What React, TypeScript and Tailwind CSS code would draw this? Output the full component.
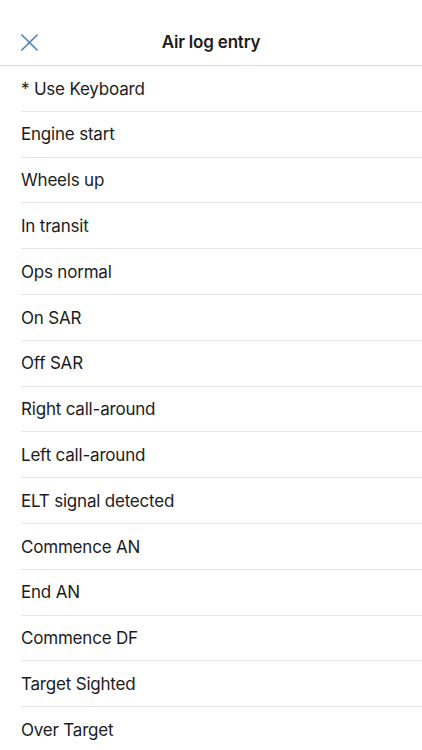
import React from "react";

const entries = [
  "* Use Keyboard",
  "Engine start",
  "Wheels up",
  "In transit",
  "Ops normal",
  "On SAR",
  "Off SAR",
  "Right call-around",
  "Left call-around",
  "ELT signal detected",
  "Commence AN",
  "End AN",
  "Commence DF",
  "Target Sighted",
  "Over Target",
];

const App: React.FC = () => {
  return (
    <div
      className="w-[422px] h-[750px] overflow-hidden bg-white text-[#1c1c1e]"
      style={{ fontFamily: "Inter, 'Noto Sans', sans-serif" }}
    >
      {/* Header */}
      <div className="relative flex h-[66px] items-end justify-center border-b border-[#dcdcdc] pb-[10px]">
        <button className="absolute left-[20px] top-[33px] text-[#4a7cc0]" aria-label="Close">
          <svg viewBox="0 0 20 20" className="h-[19px] w-[19px]" fill="none" stroke="currentColor" strokeWidth="1.6">
            <path d="M1.5 1.5 L18.5 18.5 M18.5 1.5 L1.5 18.5" />
          </svg>
        </button>
        <h1 className="text-[17px] font-semibold tracking-[-0.2px]">Air log entry</h1>
      </div>

      {/* Entries */}
      <ul className="pl-[21px]">
        {entries.map((e) => (
          <li
            key={e}
            className="flex h-[45.8px] items-center border-b border-[#e6e6e6] pt-[2px] text-[17px] tracking-[-0.2px]"
          >
            {e}
          </li>
        ))}
      </ul>
    </div>
  );
};

export default App;
